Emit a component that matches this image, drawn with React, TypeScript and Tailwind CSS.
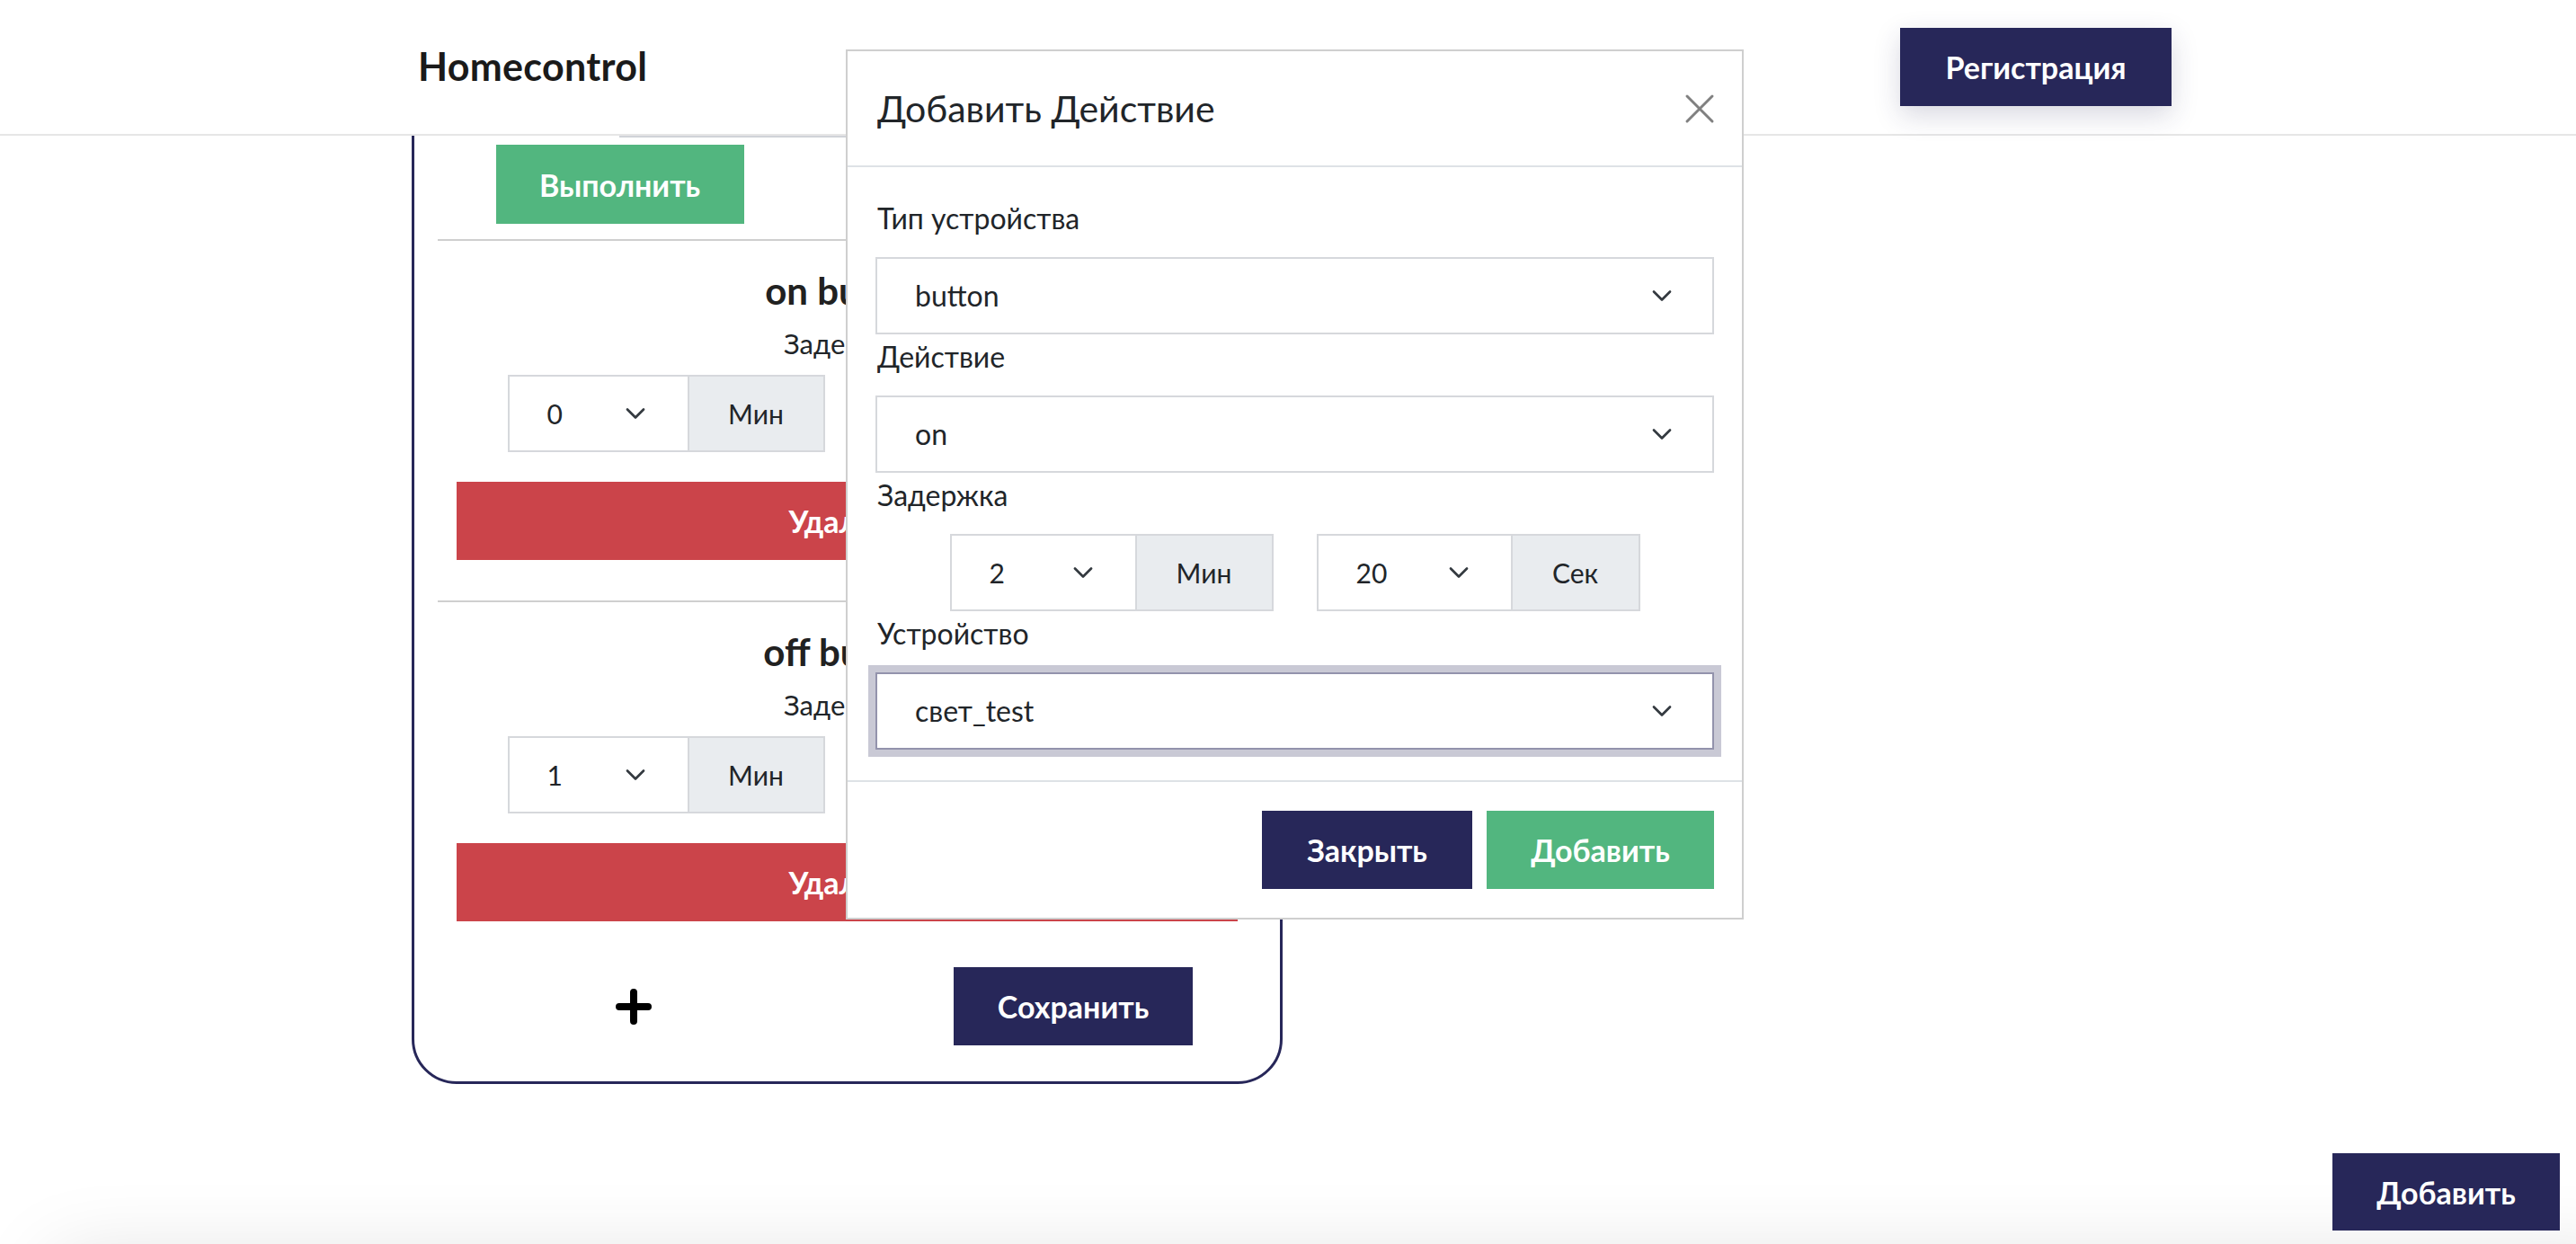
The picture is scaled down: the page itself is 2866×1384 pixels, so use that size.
import React from 'react';

const Chevron = () => (
  <svg width="24" height="24" viewBox="0 0 16 16" fill="none" className="shrink-0">
    <path d="m2 5 6 6 6-6" stroke="#343a40" strokeWidth="1.8" strokeLinecap="round" strokeLinejoin="round" />
  </svg>
);

const SelectBox = ({ value, focused = false }: { value: string; focused?: boolean }) => (
  <div
    className={
      focused
        ? 'flex h-[86px] w-full items-center justify-between border-2 border-[#9393ac] bg-white pl-[42px] pr-[44px] text-[32px] shadow-[0_0_0_8px_rgba(39,40,89,0.25)]'
        : 'flex h-[86px] w-full items-center justify-between border-2 border-[#d6d8dc] bg-white pl-[42px] pr-[44px] text-[32px]'
    }
  >
    <span>{value}</span>
    <Chevron />
  </div>
);

const DelayGroup = ({ value, unit, selectW, addonW }: { value: string; unit: string; selectW: string; addonW: string }) => (
  <div className="flex h-[86px] text-[30px]">
    <div className={`flex items-center justify-between border-2 border-[#d6d8dc] bg-white pl-[42px] pr-[46px] ${selectW}`}>
      <span>{value}</span>
      <Chevron />
    </div>
    <div className={`flex items-center justify-center border-2 border-l-0 border-[#d6d8dc] bg-[#e9ecef] ${addonW}`}>{unit}</div>
  </div>
);

const Section = ({ title, minutes }: { title: string; minutes: string }) => (
  <div className="flex flex-col">
    <div className="h-[2px] bg-[#cfcfcf]" />
    <h3 className="mt-[31px] text-center text-[42px] font-bold leading-[48px] text-[#212121]">{title}</h3>
    <p className="mt-[17px] text-center text-[31px] leading-[36px]">Задержка</p>
    <div className="mt-[17px] flex justify-center gap-[50px]">
      <DelayGroup value={minutes} unit="Мин" selectW="w-[202px]" addonW="w-[151px]" />
      <DelayGroup value="0" unit="Сек" selectW="w-[202px]" addonW="w-[151px]" />
    </div>
    <button className="mx-[21px] mt-[33px] h-[87px] bg-[#cb444a] text-[34px] font-bold text-white">Удалить</button>
    <div className="h-[45px]" />
  </div>
);

const App = () => {
  return (
    <div className="min-h-screen bg-white font-['Lato','Open_Sans',sans-serif] text-[#212529]">
      <header className="fixed left-0 right-0 top-0 z-20 h-[151px] border-b-2 border-[#e6e6e6] bg-white">
        <div className="mx-auto flex h-full w-[1950px] items-center justify-between pl-[7px]">
          <span className="text-[43px] font-bold tracking-[0.3px] text-[#1a1a1a]">Homecontrol</span>
          <button className="mr-[-8px] h-[87px] w-[302px] bg-[#272759] text-[34px] font-bold text-white shadow-[0_10px_28px_rgba(39,40,89,0.18)]">
            Регистрация
          </button>
        </div>
      </header>

      <main className="mx-auto w-[1950px] pt-[150px]">
        <div className="mt-[-120px] w-[969px] rounded-[50px] border-[3px] border-[#272759] bg-white px-[26px] pb-[40px]">
          <div className="flex justify-center pt-[60px]">
            <div className="h-[60px] w-[508px] border-b-[3px] border-[#d0d3d8] text-center text-[30px] leading-[56px]">button</div>
          </div>
          <div className="mt-[8px] flex justify-center gap-[230px]">
            <button className="h-[88px] w-[276px] bg-[#52b67f] text-[34px] font-bold text-white">Выполнить</button>
            <button className="h-[88px] w-[276px] bg-[#cb444a] text-[34px] font-bold text-white">Удалить</button>
          </div>
          <div className="mt-[17px]">
            <Section title="on button" minutes="0" />
            <Section title="off button" minutes="1" />
          </div>
          <div className="mt-[6px] flex items-center">
            <svg width="42" height="42" viewBox="0 0 42 42" className="ml-[197px] shrink-0">
              <path d="M21 5v32M5 21h32" stroke="#000" strokeWidth="8" strokeLinecap="round" />
            </svg>
            <button className="ml-[335px] h-[87px] w-[266px] bg-[#272759] text-[34px] font-bold text-white">Сохранить</button>
          </div>
        </div>
      </main>

      {/* modal */}
      <div className="fixed left-[941px] top-[55px] z-30 w-[999px] border-2 border-[#cfcfcf] bg-white">
        <div className="flex h-[129px] items-center justify-between border-b-2 border-[#dee2e6] pl-[33px] pr-[30px]">
          <h2 className="text-[41px] leading-[48px] text-[#212529]">Добавить Действие</h2>
          <svg width="34" height="34" viewBox="0 0 34 34">
            <path d="M3 3l28 28M31 3L3 31" stroke="#808080" strokeWidth="3" strokeLinecap="round" />
          </svg>
        </div>
        <div className="px-[31px] pb-[34px] pt-[32px]">
          <p className="mb-[25px] mt-[7px] pl-[2px] text-[32px] leading-[36px]">Тип устройства</p>
          <SelectBox value="button" />
          <p className="mb-[25px] mt-[7px] pl-[2px] text-[32px] leading-[36px]">Действие</p>
          <SelectBox value="on" />
          <p className="mb-[25px] mt-[7px] pl-[2px] text-[32px] leading-[36px]">Задержка</p>
          <div className="flex justify-center gap-[48px]">
            <DelayGroup value="2" unit="Мин" selectW="w-[208px]" addonW="w-[152px]" />
            <DelayGroup value="20" unit="Сек" selectW="w-[218px]" addonW="w-[142px]" />
          </div>
          <p className="mb-[25px] mt-[7px] pl-[2px] text-[32px] leading-[36px]">Устройство</p>
          <SelectBox value="свет_test" focused />
        </div>
        <div className="flex justify-end gap-[16px] border-t-2 border-[#dee2e6] px-[31px] py-[32px]">
          <button className="h-[87px] w-[234px] bg-[#272759] text-[34px] font-bold text-white">Закрыть</button>
          <button className="h-[87px] w-[253px] bg-[#52b67f] text-[34px] font-bold text-white">Добавить</button>
        </div>
      </div>

      {/* footer shadow peeking from below */}
      <div className="fixed left-[60px] right-[-60px] top-[1400px] z-10 h-[200px] bg-white shadow-[0_0_90px_rgba(0,0,0,0.13)]" />

      <button className="fixed bottom-[15px] right-[18px] z-40 h-[86px] w-[253px] bg-[#272759] text-[34px] font-bold text-white">
        Добавить
      </button>
    </div>
  );
};

export default App;
